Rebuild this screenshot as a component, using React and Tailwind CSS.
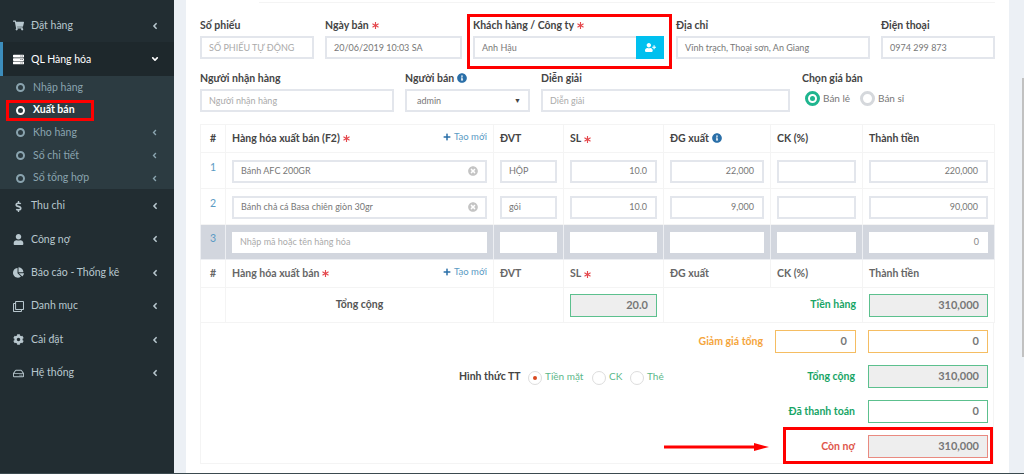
import React from 'react';
import {
  FaShoppingCart, FaServer, FaDollarSign, FaUser, FaChartPie, FaRegClone, FaCog, FaRegHdd,
  FaAngleLeft, FaAngleDown, FaAsterisk, FaInfoCircle, FaPlus, FaTimesCircle, FaUserPlus,
} from 'react-icons/fa';

const inputBase = 'h-[23px] border-2 border-[#e3e6ec] bg-white px-[7px] text-[9px] text-[#777] flex items-center shrink-0 whitespace-nowrap';

function NavItem({ icon: Icon, label }) {
  return (
    <div className="flex h-[33.4px] items-center pl-[13px] pr-[14px] text-[#b8c7ce]">
      <span className="flex w-[18px] shrink-0 justify-start text-[11px]"><Icon /></span>
      <span className="flex-1 whitespace-nowrap text-[10.5px]">{label}</span>
      <FaAngleLeft className="text-[10px]" />
    </div>
  );
}

function SubItem({ label, active, arrow }) {
  return (
    <div className={`flex h-[22.6px] items-center pl-[16px] pr-[15px] ${active ? 'font-bold text-white' : 'text-[#8aa4af]'}`}>
      <span className="mr-[8px] h-[9px] w-[9px] shrink-0 rounded-full border-2 border-current" />
      <span className="flex-1 whitespace-nowrap text-[10.5px]">{label}</span>
      {arrow && <FaAngleLeft className="text-[9px]" />}
    </div>
  );
}

function Star() {
  return <FaAsterisk className="ml-[3px] inline-block align-[-1px] text-[7px] text-[#e5484d]" />;
}

function Field({ label, star, info, width, children }) {
  return (
    <div className={`shrink-0 ${width}`}>
      <div className="flex h-[18px] items-start whitespace-nowrap text-[10.5px] font-bold leading-[14px] text-[#444]">
        {label}
        {star && <span className="mt-[-1px]"><Star /></span>}
        {info && <FaInfoCircle className="ml-[3px] mt-[2px] text-[10px] text-[#2a6fa8]" />}
      </div>
      {children}
    </div>
  );
}

function Cell({ value, right }) {
  return (
    <div className={`${inputBase} w-full ${right ? 'justify-end pr-[8px]' : ''}`}>{value}</div>
  );
}

function HeadRow({ title, star, f2Info, muted }) {
  const color = muted ? 'text-[#666]' : 'text-[#444]';
  const th = `border border-[#f4f4f4] px-[6px] text-left text-[10.5px] font-bold ${color}`;
  return (
    <tr className="h-[28px]">
      <th className={`border border-[#f4f4f4] text-center text-[10.5px] font-bold ${color}`}>#</th>
      <th className={th}>
        <div className="flex items-center">
          <span>{title}</span>
          {star && <Star />}
          <span className="mb-[3px] ml-auto flex items-center text-[9.5px] font-normal text-[#5b9bc4]">
            <FaPlus className="mr-[3px] text-[8px] text-[#2a6fa8]" />Tạo mới
          </span>
        </div>
      </th>
      <th className={th}>ĐVT</th>
      <th className={th}>SL<Star /></th>
      <th className={th}>
        ĐG xuất{f2Info && <FaInfoCircle className="ml-[3px] inline-block align-[-1px] text-[10px] text-[#2a6fa8]" />}
      </th>
      <th className={th}>CK (%)</th>
      <th className={th}>Thành tiền</th>
    </tr>
  );
}

function ItemRow({ no, name, unit, qty, price, total }) {
  const td = 'border border-[#f4f4f4] px-[6px] pt-[1px] align-middle';
  return (
    <tr className="h-[36px]">
      <td className="border border-[#f4f4f4] pb-[6px] text-center align-middle text-[10.5px] text-[#5b9bc4]">{no}</td>
      <td className={td}>
        <div className={`${inputBase} w-full justify-between`}>
          {name}
          <FaTimesCircle className="text-[10px] text-[#c4c4c4]" />
        </div>
      </td>
      <td className={td}><Cell value={unit} /></td>
      <td className={td}><Cell value={qty} right /></td>
      <td className={td}><Cell value={price} right /></td>
      <td className={td}><Cell /></td>
      <td className={td}><Cell value={total} right /></td>
    </tr>
  );
}

function SummaryInput({ value, tone, width = 'w-[120px]' }) {
  const tones = {
    green: 'border-[#5cc08e] bg-[#eee]',
    greenWhite: 'border-[#5cc08e] bg-white',
    orange: 'border-[#f5bd62] bg-white',
    red: 'border-[#e98a80] bg-[#eee]',
  };
  return (
    <div className={`flex h-[23px] shrink-0 items-center justify-end border pr-[8px] text-[11px] font-bold text-[#777] ${tones[tone]} ${width}`}>
      {value}
    </div>
  );
}

function PayRadio({ label, checked, className }) {
  return (
    <span className={`flex items-center ${className}`}>
      <span className="mr-[3px] mt-[3px] flex h-[14px] w-[14px] items-center justify-center rounded-full border border-[#ddd] bg-white">
        {checked && <span className="h-[4px] w-[4px] rounded-full bg-[#d9491f]" />}
      </span>
      <span className="whitespace-nowrap text-[10px] text-[#5cb88a]">{label}</span>
    </span>
  );
}

export default function App() {
  return (
    <div className="relative flex h-[474px] w-[1024px] overflow-hidden border-b border-[#3b4a4f] bg-[#ecf0f5] font-['Lato','Noto_Sans',sans-serif]">
      <aside className="w-[174px] shrink-0 bg-[#222d32] pt-[9px]">
        <NavItem icon={FaShoppingCart} label="Đặt hàng" />
        <div className="flex h-[34px] items-center border-l-[3px] border-[#3c8dbc] bg-[#1e282c] pl-[10px] pr-[14px] text-white">
          <FaServer className="mr-[7px] shrink-0 text-[11px]" />
          <span className="flex-1 text-[10.5px]">QL Hàng hóa</span>
          <FaAngleDown className="text-[10px]" />
        </div>
        <div className="bg-[#2c3b41]">
          <SubItem label="Nhập hàng" />
          <SubItem label="Xuất bán" active />
          <SubItem label="Kho hàng" arrow />
          <SubItem label="Sổ chi tiết" arrow />
          <SubItem label="Sổ tổng hợp" arrow />
        </div>
        <NavItem icon={FaDollarSign} label="Thu chi" />
        <NavItem icon={FaUser} label="Công nợ" />
        <NavItem icon={FaChartPie} label="Báo cáo - Thống kê" />
        <NavItem icon={FaRegClone} label="Danh mục" />
        <NavItem icon={FaCog} label="Cài đặt" />
        <NavItem icon={FaRegHdd} label="Hệ thống" />
      </aside>

      <main className="ml-[12px] w-[823px] bg-white pl-[14px] pr-[14px]">
        <div className="ml-[59px] h-[3px] border-b border-[#f4f4f4]" />

        {/* Thông tin phiếu */}
        <div className="mt-[15px] flex w-[795px]">
          <Field label="Số phiếu" width="w-[114px]">
            <div className={`${inputBase} w-full text-[#aaa]`}>SỐ PHIẾU TỰ ĐỘNG</div>
          </Field>
          <Field label="Ngày bán" star width="ml-[11px] w-[137px]">
            <div className={`${inputBase} w-full`}>20/06/2019 10:03 SA</div>
          </Field>
          <Field label="Khách hàng / Công ty" star width="ml-[11px] w-[191px]">
            <div className="flex">
              <div className={`${inputBase} flex-1 border-r-0`}>Anh Hậu</div>
              <div className="flex h-[23px] w-[28px] items-center justify-center bg-[#00c0ef] text-[11px] text-white">
                <FaUserPlus />
              </div>
            </div>
          </Field>
          <Field label="Địa chỉ" width="ml-[12px] w-[194px]">
            <div className={`${inputBase} w-full`}>Vĩnh trạch, Thoại sơn, An Giang</div>
          </Field>
          <Field label="Điện thoại" width="ml-[11px] w-[114px]">
            <div className={`${inputBase} w-full`}>0974 299 873</div>
          </Field>
        </div>

        <div className="mt-[12px] flex w-[795px]">
          <Field label="Người nhận hàng" width="w-[194px]">
            <div className={`${inputBase} w-full text-[#aaa]`}>Người nhận hàng</div>
          </Field>
          <Field label="Người bán" info width="ml-[11px] w-[125px]">
            <div className={`${inputBase} w-full justify-between pl-[10px]`}>
              admin
              <span className="text-[7px] text-[#444]">▼</span>
            </div>
          </Field>
          <Field label="Diễn giải" width="ml-[11px] w-[249px]">
            <div className={`${inputBase} w-full text-[#aaa]`}>Diễn giải</div>
          </Field>
          <Field label="Chọn giá bán" width="ml-[12px] w-[150px]">
            <div className="flex h-[18px] items-center whitespace-nowrap pl-[3px] text-[10px] text-[#777]">
              <span className="mr-[3px] flex h-[15px] w-[15px] items-center justify-center rounded-full border-[3px] border-[#1fb58f]">
                <span className="h-[5px] w-[5px] rounded-full bg-[#1fb58f]" />
              </span>
              <span className="w-[28px]">Bán lẻ</span>
              <span className="ml-[9px] mr-[3px] h-[15px] w-[15px] rounded-full border-[3px] border-[#d5d8dc]" />
              Bán sỉ
            </div>
          </Field>
        </div>

        {/* Bảng hàng hóa */}
        <div className="mt-[12px] w-[794px]">
          <table className="w-full table-fixed border-collapse">
            <colgroup>
              <col className="w-[25px]" />
              <col className="w-[268px]" />
              <col className="w-[70px]" />
              <col className="w-[100px]" />
              <col className="w-[107px]" />
              <col className="w-[92px]" />
              <col className="w-[132px]" />
            </colgroup>
            <tbody>
              <HeadRow title="Hàng hóa xuất bán (F2)" star f2Info />
              <ItemRow no="1" name="Bánh AFC 200GR" unit="HỘP" qty="10.0" price="22,000" total="220,000" />
              <ItemRow no="2" name="Bánh chả cá Basa chiên giòn 30gr" unit="gói" qty="10.0" price="9,000" total="90,000" />
              <tr className="h-[35px] bg-[#d2d6de]">
                <td className="border border-[#eceef2] pb-[6px] text-center text-[10.5px] text-[#5b9bc4]">3</td>
                <td className="border border-[#eceef2] px-[6px]">
                  <div className="flex h-[21px] items-center bg-white px-[8px] text-[9px] text-[#aaa]">Nhập mã hoặc tên hàng hóa</div>
                </td>
                <td className="border border-[#eceef2] px-[6px]"><div className="h-[21px] bg-white" /></td>
                <td className="border border-[#eceef2] px-[6px]"><div className="h-[21px] bg-white" /></td>
                <td className="border border-[#eceef2] px-[6px]"><div className="h-[21px] bg-white" /></td>
                <td className="border border-[#eceef2] px-[6px]"><div className="h-[21px] bg-white" /></td>
                <td className="border border-[#eceef2] px-[6px]">
                  <div className="flex h-[21px] items-center justify-end bg-white pr-[9px] text-[9px] text-[#888]">0</div>
                </td>
              </tr>
              <HeadRow title="Hàng hóa xuất bán" star muted />
              <tr className="h-[35px]">
                <td className="border border-[#f4f4f4]" />
                <td className="border border-[#f4f4f4] text-center text-[10.5px] font-bold text-[#555]">Tổng cộng</td>
                <td className="border border-[#f4f4f4]" />
                <td className="border border-[#f4f4f4] px-[6px]"><SummaryInput value="20.0" tone="green" width="w-full" /></td>
                <td colSpan={2} className="border border-[#f4f4f4] px-[6px] text-right text-[10.5px] font-bold text-[#18a566]">Tiền hàng</td>
                <td className="border border-[#f4f4f4] px-[6px]"><SummaryInput value="310,000" tone="green" width="w-full" /></td>
              </tr>
            </tbody>
          </table>

          {/* Tổng kết */}
          <div className="flex h-[141px] flex-col gap-[12px] border border-t-0 border-[#f4f4f4] pb-[6px] pr-[5px] pt-[7px]">
            <div className="flex h-[23px] items-center justify-end">
              <span className="text-[10.5px] font-bold text-[#f5a53c]">Giảm giá tổng</span>
              <SummaryInput value="0" tone="orange" width="ml-[12px] w-[81px]" />
              <SummaryInput value="0" tone="orange" width="ml-[12px] w-[120px]" />
            </div>
            <div className="flex h-[23px] items-center pl-[258px]">
              <span className="w-[60px] whitespace-nowrap text-[10.5px] font-bold text-[#444]">Hình thức TT</span>
              <PayRadio label="Tiền mặt" checked className="ml-[9px] w-[64px]" />
              <PayRadio label="CK" className="w-[38px]" />
              <PayRadio label="Thẻ" />
              <span className="ml-auto text-[10.5px] font-bold text-[#18a566]">Tổng cộng</span>
              <SummaryInput value="310,000" tone="green" width="ml-[13px] w-[120px]" />
            </div>
            <div className="flex h-[23px] items-center justify-end">
              <span className="text-[10.5px] font-bold text-[#18a566]">Đã thanh toán</span>
              <SummaryInput value="0" tone="greenWhite" width="ml-[13px] w-[120px]" />
            </div>
            <div className="flex h-[23px] items-center justify-end">
              <span className="text-[10.5px] font-bold text-[#e0564b]">Còn nợ</span>
              <SummaryInput value="310,000" tone="red" width="ml-[13px] w-[120px]" />
            </div>
          </div>
        </div>
      </main>

      {/* Thanh cuộn */}
      <div className="absolute right-0 top-[78px] h-[279px] w-[2px] bg-[#c1c1c1]" />

      {/* Khung chú thích đỏ */}
      <div className="absolute left-[6px] top-[100px] h-[21px] w-[88px] border-[3px] border-[#f00]" />
      <div className="absolute left-[467px] top-[14px] h-[55px] w-[205px] border-[3px] border-[#f00]" />
      <div className="absolute left-[783px] top-[427px] h-[37px] w-[210px] border-[3px] border-[#f00]" />
      <svg className="absolute left-[663px] top-[441px]" width="107" height="12" viewBox="0 0 107 12">
        <rect x="1" y="4.5" width="92" height="3" fill="#f00" />
        <polygon points="91,2 106,6 91,10" fill="#f00" />
      </svg>
    </div>
  );
}
